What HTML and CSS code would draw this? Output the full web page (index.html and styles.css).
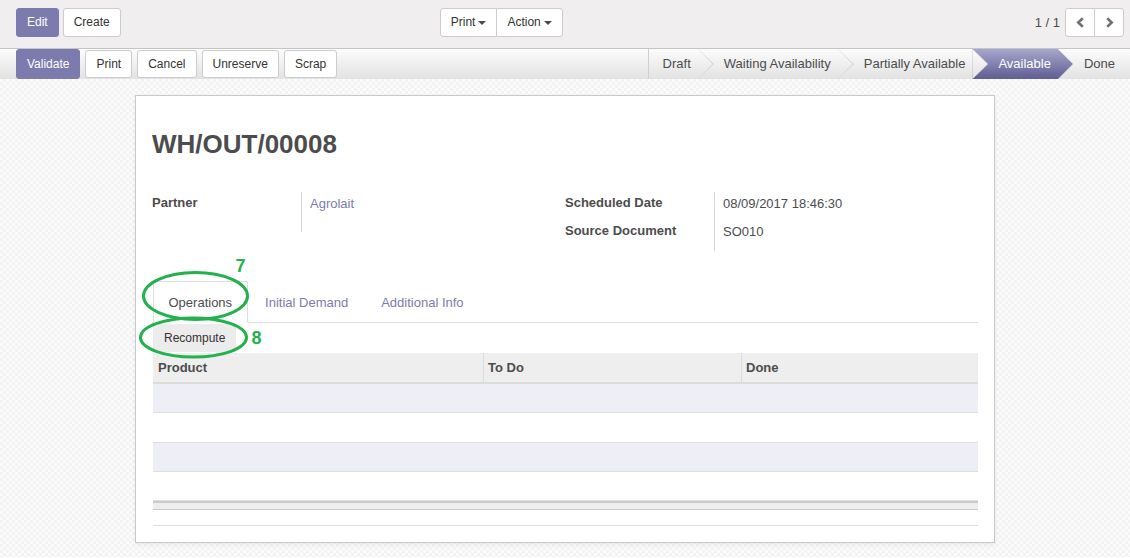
FILE: index.html
```html
<!DOCTYPE html>
<html lang="en">
<head>
<meta charset="utf-8">
<title>WH/OUT/00008</title>
<link rel="stylesheet" href="styles.css">
</head>
<body>
<div class="cp">
  <div class="cp-top">
    <div class="btn-row">
      <button class="btn btn-primary">Edit</button>
      <button class="btn">Create</button>
    </div>
    <div class="btn-group sidebar">
      <button class="btn">Print <span class="caret"></span></button>
      <button class="btn">Action <span class="caret"></span></button>
    </div>
    <div class="pager">
      <span class="pager-value">1 / 1</span>
      <div class="btn-group">
        <button class="btn btn-icon" aria-label="Previous"><svg width="9" height="11" viewBox="0 0 9 11"><polyline points="6.8,1.3 2.3,5.5 6.8,9.7" fill="none" stroke="#707070" stroke-width="2.6" stroke-linejoin="miter"/></svg></button>
        <button class="btn btn-icon" aria-label="Next"><svg width="9" height="11" viewBox="0 0 9 11"><polyline points="2.2,1.3 6.7,5.5 2.2,9.7" fill="none" stroke="#707070" stroke-width="2.6" stroke-linejoin="miter"/></svg></button>
      </div>
    </div>
  </div>
  <div class="cp-bottom">
    <div class="actions">
      <button class="btn btn-primary btn-tall">Validate</button>
      <button class="btn btn-sm">Print</button>
      <button class="btn btn-sm">Cancel</button>
      <button class="btn btn-sm">Unreserve</button>
      <button class="btn btn-sm">Scrap</button>
    </div>
    <div class="statusbar">
      <span class="status first">Draft</span>
      <span class="status">Waiting Availability</span>
      <span class="status">Partially Available</span>
      <span class="status active">Available</span>
      <span class="status last">Done</span>
    </div>
  </div>
</div>

<div class="content">
  <div class="sheet">
    <h1 class="title">WH/OUT/00008</h1>
    <div class="groups">
      <div class="group">
        <div class="label">Partner</div>
        <div class="value value-end-tall"><span class="link">Agrolait</span></div>
      </div>
      <div class="group">
        <div class="label">Scheduled Date</div>
        <div class="value">08/09/2017 18:46:30</div>
        <div class="label">Source Document</div>
        <div class="value value-end">SO010</div>
      </div>
    </div>

    <div class="notebook">
      <ul class="tabs">
        <li class="tab active">Operations</li>
        <li class="tab">Initial Demand</li>
        <li class="tab">Additional Info</li>
      </ul>
      <div class="tab-pane">
        <button class="btn-recompute">Recompute</button>
        <div class="list">
          <div class="list-head">
            <div class="th col-product">Product</div>
            <div class="th col-todo">To Do</div>
            <div class="th col-done">Done</div>
          </div>
          <div class="list-row odd"></div>
          <div class="list-row"></div>
          <div class="list-row odd"></div>
          <div class="list-row"></div>
          <div class="list-foot"></div>
          <div class="list-pager"></div>
        </div>
      </div>
    </div>
  </div>
</div>

<svg class="annot" width="1130" height="558" viewBox="0 0 1130 558" aria-hidden="true">
  <ellipse cx="195.5" cy="296" rx="52" ry="23.5" fill="none" stroke="#22b14c" stroke-width="3"/>
  <ellipse cx="193.5" cy="337.5" rx="53" ry="19.5" fill="none" stroke="#22b14c" stroke-width="3"/>
</svg>
<span class="annot-num n7">7</span>
<span class="annot-num n8">8</span>
</body>
</html>
```

FILE: styles.css
```css
html, body {
  margin: 0;
  padding: 0;
  overflow: hidden;
}
body {
  font-family: "Liberation Sans", Arial, Helvetica, sans-serif;
  font-size: 13px;
  color: #4c4c4c;
  width: 1130px;
  height: 558px;
}

/* ---------- buttons ---------- */
.btn {
  font-family: inherit;
  font-size: 12px;
  color: #333;
  background: #fff;
  border: 1px solid #ccc;
  border-radius: 3px;
  height: 29px;
  padding: 0 10px;
  line-height: 27px;
  display: inline-flex;
  align-items: center;
  justify-content: center;
  box-sizing: border-box;
  cursor: pointer;
}
.btn-primary {
  background: #7c7bad;
  border-color: #7c7bad;
  color: #fff;
}
.btn-sm { height: 28px; }
.btn-tall { height: 30px; }

.btn-group { display: flex; }
.btn-group .btn { border-radius: 0; }
.btn-group .btn + .btn { margin-left: -1px; }
.btn-group .btn:first-child { border-radius: 3px 0 0 3px; }
.btn-group .btn:last-child { border-radius: 0 3px 3px 0; }

.caret {
  display: inline-block;
  width: 0;
  height: 0;
  margin-left: 3px;
  border-top: 4px solid #4c4c4c;
  border-left: 4px solid transparent;
  border-right: 4px solid transparent;
}

/* ---------- control panel ---------- */
.cp { background: #f0eeee; }
.cp-top {
  height: 48px;
  box-sizing: content-box;
  border-bottom: 1px solid #c4c4c4;
  display: flex;
  align-items: flex-start;
  padding: 0 6px 0 16px;
}
.cp-top > * { margin-top: 8px; }
.btn-row { display: flex; gap: 4px; }
.sidebar { margin-left: 319px; }
.pager {
  margin-left: auto;
  display: flex;
  align-items: center;
  gap: 5px;
}
.pager-value { font-size: 13px; color: #4c4c4c; }
.btn-icon { width: 30px; padding: 0; }

.cp-bottom {
  height: 30px;
  display: flex;
  align-items: center;
  padding-left: 16px;
  background: linear-gradient(#fcfcfc, #e2e2e2);
}
.actions {
  display: flex;
  align-items: center;
  gap: 5px;
}

.statusbar {
  margin-left: auto;
  display: flex;
  height: 30px;
}
.status {
  position: relative;
  padding: 0 7px 0 26px;
  line-height: 30px;
  font-size: 13px;
  color: #4c4c4c;
  white-space: nowrap;
}
.status.first {
  padding-left: 14px;
  border-left: 1px solid #cfcfcf;
}
.status.last { padding-right: 15px; }
.status:not(.last)::before,
.status:not(.last)::after {
  content: "";
  position: absolute;
  top: 0;
  height: 30px;
  z-index: 1;
  clip-path: polygon(0 0, 100% 50%, 0 100%);
}
.status:not(.last)::before {
  right: -16px;
  width: 16px;
  background: #cbcbcb;
}
.status:not(.last)::after {
  right: -15px;
  width: 15px;
  background: linear-gradient(#fcfcfc, #e2e2e2);
}
.status.active {
  color: #fff;
  background: linear-gradient(#a7a6cc, #5f5d92);
}
.status.active::before { display: none; }
.status.active::after {
  background: linear-gradient(#a7a6cc, #5f5d92);
}

/* ---------- content ---------- */
.content {
  height: 478px;
  box-sizing: border-box;
  padding-top: 16px;
  background: repeating-conic-gradient(#f3f3f3 0 25%, #fbfbfb 0 50%) 0 0 / 6px 6px;
}
.sheet {
  width: 860px;
  box-sizing: border-box;
  margin: 0 auto;
  background: #fff;
  border: 1px solid #c8c8c8;
  box-shadow: 0 2px 5px rgba(0, 0, 0, 0.06);
  padding: 33px 16px 16px;
}
.title {
  margin: 0 0 33px;
  font-size: 26px;
  line-height: 30px;
  font-weight: bold;
  color: #4c4c4c;
}

.groups { display: flex; }
.group {
  flex: 1;
  display: grid;
  grid-template-columns: 149px 1fr;
  align-content: start;
}
.label {
  font-weight: bold;
  line-height: 20px;
  padding-top: 1px;
  padding-bottom: 7px;
}
.value {
  border-left: 1px solid #d6d6d6;
  padding: 2px 0 6px 8px;
  line-height: 20px;
}
.value-end-tall { padding-bottom: 18px; }
.value-end { padding-bottom: 9px; }
.link { color: #7c7bad; }

/* ---------- notebook ---------- */
.notebook { margin-top: 30px; }
.tabs {
  display: flex;
  list-style: none;
  margin: 0;
  padding: 0 0 0 1px;
  border-bottom: 1px solid #ddd;
}
.tab {
  padding: 11px 14.5px 9px;
  line-height: 20px;
  border: 1px solid transparent;
  margin-right: 2px;
  margin-bottom: -1px;
  color: #7c7bad;
  font-size: 13px;
}
.tab.active {
  border-color: #ddd;
  border-bottom-color: #fff;
  background: #fff;
  color: #4c4c4c;
}
.tab-pane { padding-left: 1px; }
.btn-recompute {
  display: block;
  margin-top: 1px;
  height: 28px;
  padding: 0 11px;
  border: none;
  border-radius: 2px;
  background: #ececec;
  font-family: inherit;
  font-size: 12px;
  color: #333;
}

.list { margin-top: 1px; }
.list-head {
  display: flex;
  height: 29px;
  line-height: 29px;
  background: #eee;
  border-bottom: 2px solid #dcdcdc;
  font-weight: bold;
  color: #4c4c4c;
}
.th {
  box-sizing: border-box;
  padding-left: 5px;
}
.th + .th {
  border-left: 1px solid #dcdcdc;
  padding-left: 4px;
}
.col-product { width: 330px; }
.col-todo { width: 258px; }
.col-done { flex: 1; }
.list-row {
  height: 28.25px;
  border-bottom: 1px solid #dedede;
}
.list-row.odd { background: #eeeef6; }
.list-foot {
  height: 6px;
  background: #eee;
  border-top: 2px solid #cbcbcb;
  border-bottom: 1px solid #cbcbcb;
}
.list-pager {
  height: 15px;
  border-bottom: 1px solid #dedede;
}

/* ---------- annotations ---------- */
.annot {
  position: absolute;
  left: 0;
  top: 0;
  pointer-events: none;
}
.annot-num {
  position: absolute;
  font-size: 18px;
  line-height: 18px;
  font-weight: bold;
  color: #22b14c;
}
.n7 { left: 235.5px; top: 257px; }
.n8 { left: 251.5px; top: 329px; }
```
